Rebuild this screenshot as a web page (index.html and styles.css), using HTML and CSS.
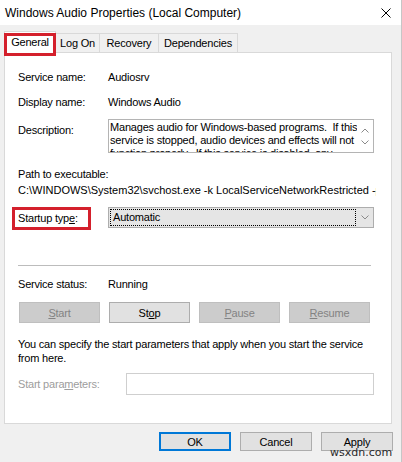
FILE: index.html
```html
<!DOCTYPE html>
<html lang="en">
<head>
<meta charset="utf-8">
<title>Windows Audio Properties (Local Computer)</title>
<link rel="stylesheet" href="styles.css">
</head>
<body>
<div class="window">
  <header class="titlebar">
    <span class="title">Windows Audio Properties (Local Computer)</span>
    <svg class="close" width="10" height="10" viewBox="0 0 10 10"><path d="M0.5 0.5L9.5 9.5M9.5 0.5L0.5 9.5" stroke="#000" stroke-width="1" fill="none"/></svg>
  </header>

  <nav class="tabs">
    <div class="tab tab-active tab-general">General</div>
    <div class="tab tab-logon">Log On</div>
    <div class="tab tab-recovery">Recovery</div>
    <div class="tab tab-deps">Dependencies</div>
  </nav>

  <main class="panel">
    <div class="row row-info row-first"><span class="label">Service name:</span><span>Audiosrv</span></div>
    <div class="row row-info"><span class="label">Display name:</span><span>Windows Audio</span></div>
    <div class="row row-desc">
      <span class="label label-desc">Description:</span>
      <div class="desc-box">
        <div class="desc-text">Manages audio for Windows-based programs.  If this
service is stopped, audio devices and effects will not
function properly.  If this service is disabled, any
services that explicitly depend on it will fail to start</div>
        <div class="desc-scroll">
          <svg width="8" height="5" viewBox="0 0 8 5"><path d="M0.5 4.5L4 1L7.5 4.5" stroke="#8a8a8a" stroke-width="1" fill="none"/></svg>
          <svg width="8" height="5" viewBox="0 0 8 5"><path d="M0.5 0.5L4 4L7.5 0.5" stroke="#8a8a8a" stroke-width="1" fill="none"/></svg>
        </div>
      </div>
    </div>
    <div class="path-label">Path to executable:</div>
    <div class="path-value">C:\WINDOWS\System32\svchost.exe -k LocalServiceNetworkRestricted -p</div>
    <div class="row row-startup">
      <span class="label">Startup typ<u>e</u>:</span>
      <div class="combo">
        <span class="combo-focus">Automatic</span>
        <svg class="combo-arrow" width="8" height="5" viewBox="0 0 8 5"><path d="M0.5 0.5L4 4L7.5 0.5" stroke="#8a8a8a" stroke-width="1" fill="none"/></svg>
      </div>
    </div>
    <div class="sep"></div>
    <div class="row row-status"><span class="label">Service status:</span><span>Running</span></div>
    <div class="svc-buttons">
      <button class="btn btn-disabled" disabled><u>S</u>tart</button>
      <button class="btn">St<u>o</u>p</button>
      <button class="btn btn-disabled" disabled><u>P</u>ause</button>
      <button class="btn btn-disabled" disabled><u>R</u>esume</button>
    </div>
    <p class="help">You can specify the start parameters that apply when you start the service<br>from here.</p>
    <div class="row row-params">
      <span class="label-params">Start para<u>m</u>eters:</span>
      <div class="params-input"></div>
    </div>
  </main>

  <footer class="dialog-buttons">
    <button class="btn dlg-btn dlg-default">OK</button>
    <button class="btn dlg-btn">Cancel</button>
    <button class="btn dlg-btn">Apply</button>
  </footer>

  <div class="mark mark-tab"></div>
  <div class="mark mark-startup"></div>
  <div class="watermark">wsxdn.com</div>
</div>
</body>
</html>
```

FILE: styles.css
```css
* { box-sizing: border-box; }

body {
  margin: 0;
  background: #f0f0f0;
  font-family: "Liberation Sans", Arial, sans-serif;
  font-size: 11px;
  letter-spacing: -0.2px;
  color: #000;
}

.window {
  position: relative;
  width: 402px;
  height: 462px;
  overflow: hidden;
  border-right: 1px solid #c6c6c6;
}

/* title bar */
.titlebar {
  height: 25px;
  background: #fff;
  display: flex;
  align-items: center;
  justify-content: space-between;
  padding: 0 10px 0 5px;
}
.title {
  font-size: 12px;
  letter-spacing: 0;
}
.close { display: block; }

/* tabs */
.tabs {
  display: flex;
  align-items: flex-end;
  height: 21px;
  margin-top: 6px;
  padding-left: 4px;
}
.tab {
  height: 19px;
  border: 1px solid #d9d9d9;
  border-bottom: none;
  background: #f0f0f0;
  display: flex;
  align-items: center;
  justify-content: center;
  margin-left: -1px;
}
.tab-active {
  height: 22px;
  margin-bottom: -1px;
  margin-left: 0;
  background: #fff;
  position: relative;
  z-index: 1;
  padding-bottom: 1px;
}
.tab-general { width: 52px; }
.tab-logon { width: 45px; }
.tab-recovery { width: 60px; }
.tab-deps { width: 80px; }

/* panel */
.panel {
  margin-left: 4px;
  width: 388px;
  height: 372px;
  background: #fff;
  border: 1px solid #d9d9d9;
  padding: 11px 17px 0 13px;
}

.row {
  display: grid;
  grid-template-columns: 90px 1fr;
  align-items: center;
}
.row-info { height: 25px; }

.row-desc {
  margin-top: 5px;
  align-items: start;
}
.label-desc {
  padding-top: 4px;
  line-height: 15px;
}
.desc-box {
  height: 34px;
  border: 1px solid #b4b4b4;
  display: flex;
  overflow: hidden;
}
.desc-text {
  flex: 1;
  white-space: pre;
  overflow: hidden;
  line-height: 13px;
  padding: 1px 0 0 1px;
}
.desc-scroll {
  width: 16px;
  display: flex;
  flex-direction: column;
  align-items: center;
  justify-content: space-between;
  padding: 8px 0 7px;
}
.desc-scroll svg { display: block; }

.path-label {
  margin-top: 13px;
  line-height: 16px;
}
.path-value {
  line-height: 16px;
  white-space: nowrap;
  overflow: hidden;
  letter-spacing: 0;
  margin-right: -2px;
}

.row-startup { margin-top: 9px; }
.combo {
  height: 21px;
  border: 1px solid #adadad;
  background: #e5e5e5;
  display: flex;
  align-items: center;
  padding: 0 0 0 1px;
}
.combo-focus {
  width: 246px;
  height: 17px;
  border: 1px dotted #000;
  line-height: 15px;
  padding-left: 2px;
}
.combo-arrow {
  display: block;
  margin-left: 5px;
}

.sep {
  margin-top: 37px;
  margin-right: 3px;
  height: 1px;
  background: #bcbcbc;
}

.row-status {
  margin-top: 10px;
  height: 16px;
}

/* buttons */
.btn {
  font: inherit;
  letter-spacing: inherit;
  color: #000;
  background: #e1e1e1;
  border: 1px solid #adadad;
  padding: 0;
  margin: 0;
  display: flex;
  align-items: center;
  justify-content: center;
}
.btn-disabled {
  background: #cccccc;
  border-color: #bfbfbf;
  color: #838383;
}

.svc-buttons {
  margin: 10px 4px 0 1px;
  display: flex;
  justify-content: space-between;
}
.svc-buttons .btn {
  width: 81px;
  height: 21px;
}

.help {
  margin: 14px 0 0;
  line-height: 14px;
}

.row-params {
  margin-top: 8px;
  grid-template-columns: 108px 1fr;
}
.label-params { color: #9d9d9d; }
.params-input {
  height: 22px;
  border: 1px solid #cfcfcf;
  background: #fff;
}

/* dialog buttons */
.dialog-buttons {
  display: flex;
  justify-content: flex-end;
  gap: 9px;
  margin-top: 8px;
  padding-right: 8px;
}
.dlg-btn {
  width: 72px;
  height: 19px;
}
.dlg-default {
  border: 2px solid #0078d7;
}

/* annotations */
.mark {
  position: absolute;
  border: 3px solid #d4202c;
  z-index: 2;
}
.mark-tab {
  left: 4px;
  top: 33px;
  width: 52px;
  height: 23px;
}
.mark-startup {
  left: 12px;
  top: 207px;
  width: 79px;
  height: 23px;
}

.watermark {
  position: absolute;
  left: 330px;
  top: 446px;
  font-family: "DejaVu Sans", sans-serif;
  font-size: 11px;
  letter-spacing: 0;
  color: #2a2a2a;
  z-index: 3;
}
```
